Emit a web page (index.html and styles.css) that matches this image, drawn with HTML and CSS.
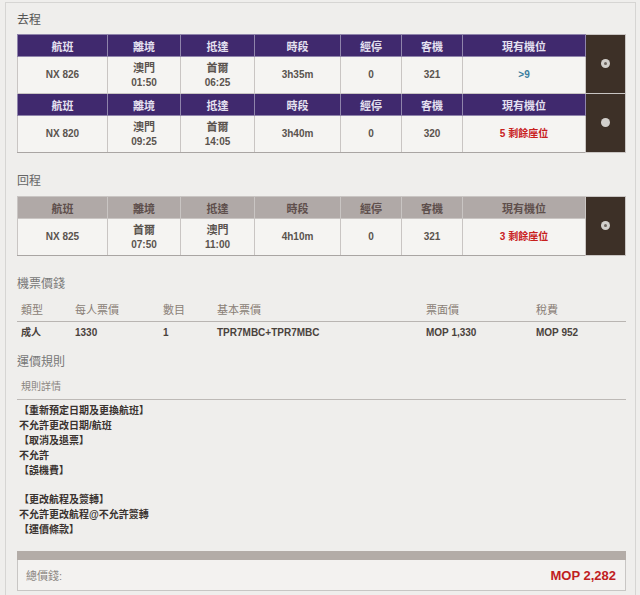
FILE: index.html
```html
<!DOCTYPE html>
<html lang="zh-Hant">
<head>
<meta charset="utf-8">
<title>航班</title>
<link rel="stylesheet" href="styles.css">
</head>
<body>
<div class="panel">
  <h2 class="sec first">去程</h2>
  <table class="flights out">
    <colgroup>
      <col class="c1"><col class="c2"><col class="c3"><col class="c4"><col class="c5"><col class="c6"><col class="c7"><col class="c8">
    </colgroup>
    <tr class="head"><th>航班</th><th>離境</th><th>抵達</th><th>時段</th><th>經停</th><th>客機</th><th>現有機位</th><td class="pick" rowspan="2"><span class="radio on"></span></td></tr>
    <tr class="data"><td>NX 826</td><td><span class="city">澳門</span><br>01:50</td><td><span class="city">首爾</span><br>06:25</td><td>3h35m</td><td>0</td><td>321</td><td class="avail">&gt;9</td></tr>
    <tr class="head"><th>航班</th><th>離境</th><th>抵達</th><th>時段</th><th>經停</th><th>客機</th><th>現有機位</th><td class="pick" rowspan="2"><span class="radio"></span></td></tr>
    <tr class="data"><td>NX 820</td><td><span class="city">澳門</span><br>09:25</td><td><span class="city">首爾</span><br>14:05</td><td>3h40m</td><td>0</td><td>320</td><td class="left">5 剩餘座位</td></tr>
  </table>

  <h2 class="sec ret-title">回程</h2>
  <table class="flights ret">
    <colgroup>
      <col class="c1"><col class="c2"><col class="c3"><col class="c4"><col class="c5"><col class="c6"><col class="c7"><col class="c8">
    </colgroup>
    <tr class="head"><th>航班</th><th>離境</th><th>抵達</th><th>時段</th><th>經停</th><th>客機</th><th>現有機位</th><td class="pick" rowspan="2"><span class="radio on"></span></td></tr>
    <tr class="data"><td>NX 825</td><td><span class="city">首爾</span><br>07:50</td><td><span class="city">澳門</span><br>11:00</td><td>4h10m</td><td>0</td><td>321</td><td class="left">3 剩餘座位</td></tr>
  </table>

  <h2 class="sec price-title">機票價錢</h2>
  <div class="price">
    <div class="prow phead"><span>類型</span><span>每人票價</span><span>數目</span><span>基本票價</span><span>票面價</span><span>稅費</span></div>
    <div class="prow pdata"><span>成人</span><span>1330</span><span>1</span><span>TPR7MBC+TPR7MBC</span><span>MOP 1,330</span><span>MOP 952</span></div>
  </div>

  <h2 class="sec rule-title">運價規則</h2>
  <div class="rule-head">規則詳情</div>
  <div class="rules">
    <p>【重新預定日期及更換航班】</p>
    <p>不允許更改日期/航班</p>
    <p>【取消及退票】</p>
    <p>不允許</p>
    <p>【誤機費】</p>
    <p class="blank">&nbsp;</p>
    <p>【更改航程及簽轉】</p>
    <p>不允許更改航程@不允許簽轉</p>
    <p>【運價條款】</p>
  </div>

  <div class="total">
    <div class="total-bar"></div>
    <div class="total-body"><span class="total-label">總價錢:</span><span class="total-val">MOP 2,282</span></div>
  </div>
</div>
</body>
</html>
```

FILE: styles.css
```css
* { box-sizing: border-box; }
html, body { margin: 0; padding: 0; }
body {
  background: #efeeec;
  font-family: "Liberation Sans", "Noto Sans CJK TC", sans-serif;
  color: #555;
  width: 640px;
  height: 595px;
  overflow: hidden;
}
.panel {
  margin: 2px 4px 0 5px;
  border: 1px solid #d6d5d3;
  border-bottom: none;
  padding: 0 9px 0 11px;
  height: 600px;
}
.sec {
  font-size: 12px;
  font-weight: normal;
  line-height: 16px;
  margin: 0;
  color: #555;
}
.sec.first { margin-top: 9px; margin-bottom: 6px; }
.sec.ret-title { margin-top: 20px; margin-bottom: 7px; color: #666; }
.sec.price-title { margin-top: 20px; color: #777; }
.sec.rule-title { margin-top: 10px; color: #777; }

.flights {
  border-collapse: collapse;
  width: 608px;
  table-layout: fixed;
}
.c1 { width: 90px; } .c2 { width: 73px; } .c3 { width: 74px; } .c4 { width: 86px; }
.c5 { width: 61px; } .c6 { width: 61px; } .c7 { width: 123px; } .c8 { width: 40px; }
.flights th, .flights td {
  border: 1px solid #c9c5c3;
  text-align: center;
  padding: 0;
}
.flights th {
  height: 22px;
  font-size: 11px;
  font-weight: bold;
  background: #40296e;
  color: #e4e0f0;
  border-color: #8f84ab;
}
.flights .data td {
  height: 37px;
  font-size: 10px;
  font-weight: bold;
  line-height: 14px;
  background: #f5f4f2;
  color: #5a534e;
}
.flights .data td .city { font-size: 11px; }
.flights .data:last-child td { border-bottom-color: #a9a5a3; }
.flights.ret th {
  background: #b0a9a7;
  color: #5e4f4c;
  border-color: #c9c5c3;
}
.flights td.pick {
  background: #3d3027;
  border-color: #c9c5c3;
  vertical-align: middle;
}
.radio {
  display: inline-block;
  width: 9px;
  height: 9px;
  border-radius: 50%;
  background: #d2cfcb;
  position: relative;
  top: -1px;
}
.radio.on::after {
  content: "";
  position: absolute;
  left: 3px;
  top: 3px;
  width: 3px;
  height: 3px;
  border-radius: 50%;
  background: #6e6660;
}
.flights .data td.avail { color: #3a7ea0; }
.flights .data td.left { color: #c8201d; }

.price { margin-top: 8px; width: 609px; }
.prow {
  display: grid;
  grid-template-columns: 54px 88px 54px 209px 110px 1fr;
  padding-left: 4px;
  font-size: 10px;
}
.phead {
  height: 22px;
  line-height: 21px;
  color: #8a7e76;
  border-bottom: 1px solid #b9b5b2;
  font-size: 11px;
}
.pdata {
  height: 22px;
  line-height: 22px;
  font-weight: bold;
  color: #4a423c;
}
.rule-head {
  margin-top: 9px;
  width: 609px;
  font-size: 10px;
  line-height: 16px;
  padding: 0 0 4px 4px;
  color: #8a8480;
  border-bottom: 1px solid #bdb9b6;
}
.rules { margin-top: 3px; padding-left: 2px; }
.rules p {
  margin: 0;
  font-size: 10px;
  line-height: 15px;
  font-weight: bold;
  color: #3a3330;
}
.rules p.blank { height: 14px; }
.total { margin-top: 14px; width: 609px; }
.total-bar { height: 9px; background: #b3aca7; }
.total-body {
  height: 31px;
  border: 1px solid #c8c6c4;
  border-top: none;
  background: #f3f2f0;
  display: flex;
  align-items: center;
  justify-content: space-between;
  padding: 0 9px 0 8px;
}
.total-label { font-size: 11px; color: #8a8580; }
.total-val { font-size: 13px; font-weight: bold; color: #c0201e; }
```
